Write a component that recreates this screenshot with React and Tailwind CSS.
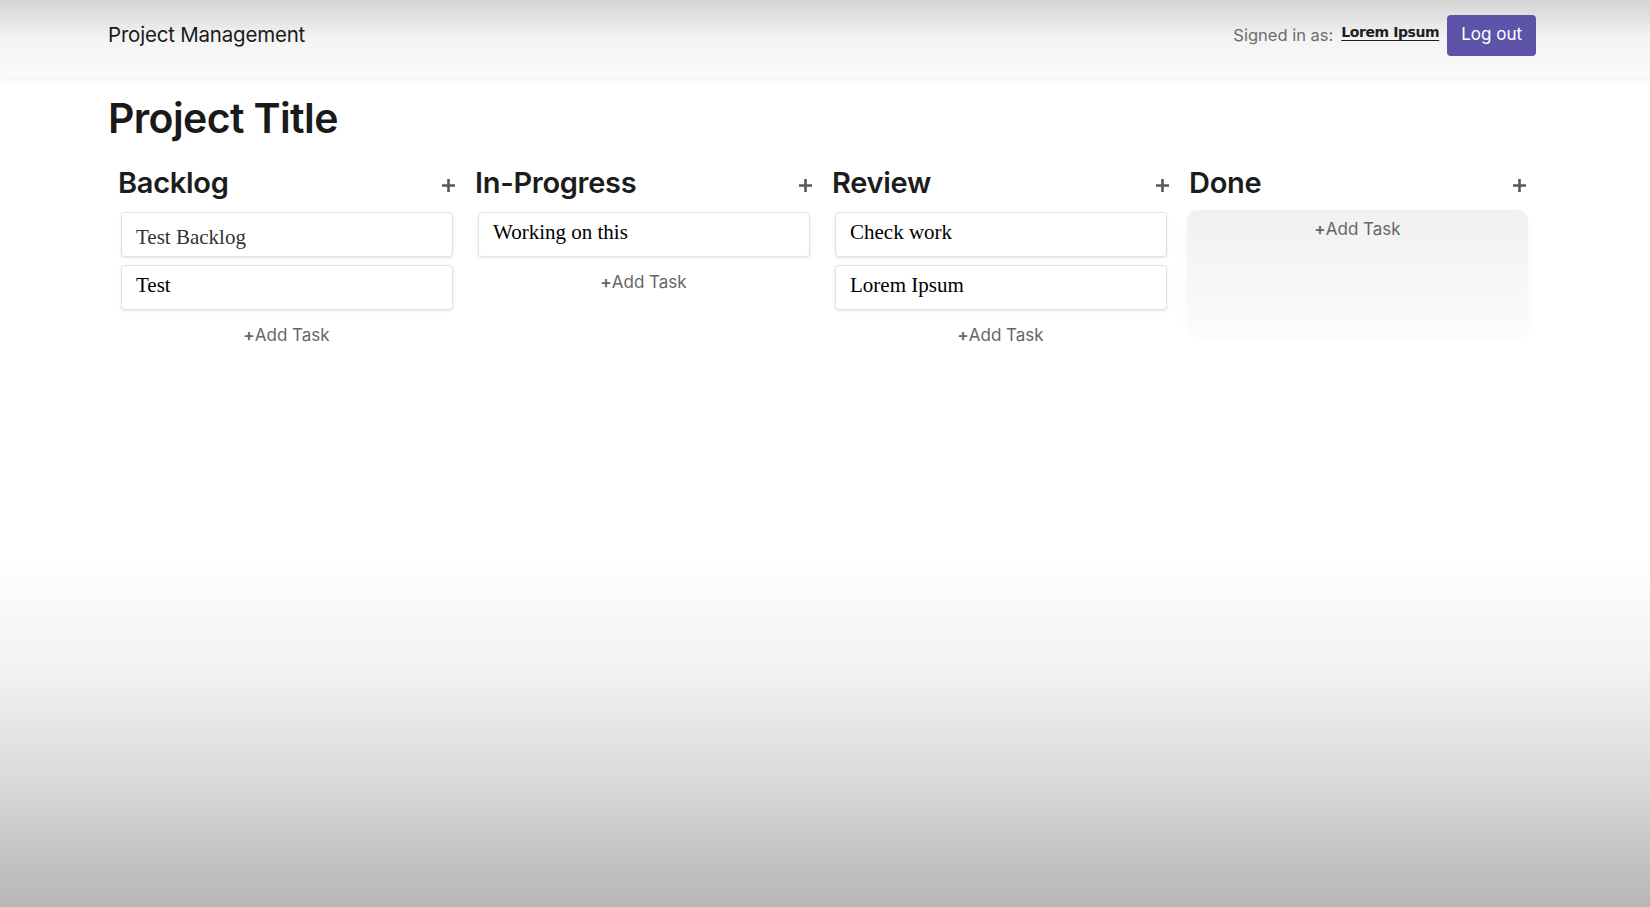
import React from 'react';

const columns = [
  { title: 'Backlog', tasks: ['Test Backlog', 'Test'] },
  { title: 'In-Progress', tasks: ['Working on this'] },
  { title: 'Review', tasks: ['Check work', 'Lorem Ipsum'] },
  { title: 'Done', tasks: [], hovered: true },
];

function PlusIcon() {
  return (
    <svg width="15" height="15" viewBox="0 0 15 15" className="mt-[5px] shrink-0">
      <path d="M7.5 1v13M1 7.5h13" stroke="#585858" strokeWidth="2.6" strokeLinecap="butt" />
    </svg>
  );
}

function TaskCard({ text }) {
  // the first backlog card sits a little lower in the shot
  const lowered = text === 'Test Backlog';
  return (
    <div
      className={
        'h-[45px] mb-2 ml-[5px] mr-[4px] bg-white border border-[#e2e2e2] rounded-[4px] shadow-[0_1px_3px_rgba(0,0,0,0.10)] pl-[14px] pr-3 font-["Liberation_Serif",serif] text-[21px] leading-[23px] ' +
        (lowered ? 'pt-[13px] text-[#333]' : 'pt-[8px] text-black')
      }
    >
      {text}
    </div>
  );
}

function Column({ col }) {
  return (
    <div className="w-[357px] px-2">
      <div className="flex items-center justify-between h-[36px] pr-[1px]">
        <h2 className="pl-[2px] text-[29px] leading-[36px] font-semibold text-[#1c1c1c] tracking-[-0.01em]">{col.title}</h2>
        <PlusIcon />
      </div>
      <div
        className={
          'mt-[9px] pt-[2px] rounded-[10px] ' +
          (col.hovered
            ? 'h-[122px] bg-gradient-to-b from-[#eff1f2] to-[#fbfbfb] shadow-[0_4px_10px_rgba(0,0,0,0.03)]'
            : '')
        }
      >
        {col.tasks.map((t) => (
          <TaskCard key={t} text={t} />
        ))}
        <div className="pt-[6px] text-center text-[17px] leading-[22px] text-[#666]">
          <span className="font-semibold">+</span>Add Task
        </div>
      </div>
    </div>
  );
}

export default function App() {
  return (
    <div className='min-h-screen font-["Inter",sans-serif] bg-[linear-gradient(to_bottom,#ffffff_0px,#ffffff_555px,#f2f2f2_670px,#dadada_780px,#b6b6b6_907px)]'>
      <header className="h-[78px] bg-gradient-to-b from-[#d4d4d4] via-[#f4f4f4] to-[#fafafa] shadow-[0_3px_5px_rgba(0,0,0,0.05)]">
        <div className="ml-[108px] w-[1428px] h-full flex items-center justify-between pb-[8px]">
          <span className="text-[20.5px] text-[#1b1b1b] tracking-[-0.01em]">Project Management</span>
          <div className="flex items-center gap-2">
            <span className="text-[16.5px] text-[#6c6c6c]">Signed in as:</span>
            <a className='font-["DejaVu_Sans",sans-serif] font-bold text-[14px] tracking-[-0.03em] text-[#1e1e1e] underline underline-offset-[3px] -mt-[6px]'>
              Lorem Ipsum
            </a>
            <button className="h-[41px] px-[14px] rounded-[4px] bg-[#5d54aa] text-white text-[17px]">Log out</button>
          </div>
        </div>
      </header>

      <main className="ml-[108px] w-[1428px] pt-[14px]">
        <h1 className="text-[41px] leading-[52px] font-semibold text-[#1a1a1a] tracking-[-0.015em]">Project Title</h1>
        <div className="flex mt-[21px]">
          {columns.map((c) => (
            <Column key={c.title} col={c} />
          ))}
        </div>
      </main>
    </div>
  );
}
